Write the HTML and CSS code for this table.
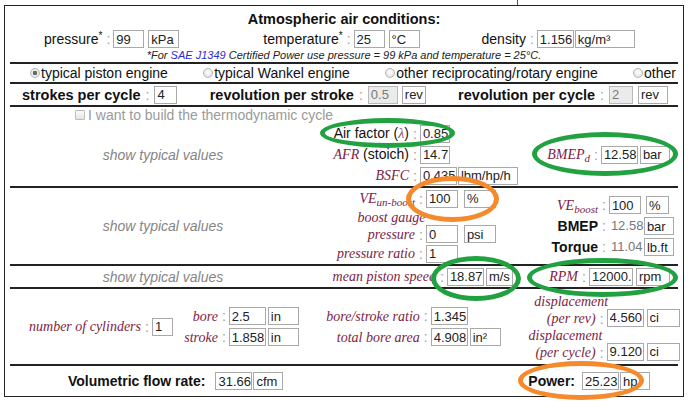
FILE: index.html
```html
<!DOCTYPE html>
<html lang="en">
<head>
<meta charset="utf-8">
<title>Engine calculator</title>
<link rel="stylesheet" href="styles.css">
</head>
<body>
<div class="tick"></div>
<div class="panel">
  <div class="sec atm">
    <div class="title">Atmospheric air conditions:</div>
    <div class="atm-row">
      <div class="fld"><span class="lb">pressure<sup>*</sup></span><span class="c">:</span><input class="box w31" value="99"><input class="box w31 g4" value="kPa"></div>
      <div class="fld g-temp"><span class="lb">temperature<sup>*</sup></span><span class="c">:</span><input class="box w31" value="25"><input class="box w31 g4" value="°C"></div>
      <div class="fld g-dens"><span class="lb">density</span><span class="c">:</span><input class="box w37" value="1.156"><input class="box w60 g1" value="kg/m³"></div>
    </div>
    <div class="note">*For <span class="link">SAE J1349</span> Certified Power use pressure = 99 kPa and temperature = 25°C.</div>
  </div>

  <div class="sec radios">
    <span class="opt"><span class="radio on"></span>typical piston engine</span>
    <span class="opt"><span class="radio"></span>typical Wankel engine</span>
    <span class="opt"><span class="radio"></span>other reciprocating/rotary engine</span>
    <span class="opt"><span class="radio"></span>other</span>
  </div>

  <div class="sec strokes">
    <div class="fld"><b class="blb">strokes per cycle</b><span class="c">:</span><input class="box w23" value="4"></div>
    <div class="fld"><b class="blb">revolution per stroke</b><span class="c">:</span><input class="box w30 dis" value="0.5" disabled><input class="box w24 g4" value="rev"></div>
    <div class="fld"><b class="blb">revolution per cycle</b><span class="c">:</span><input class="box w24 dis" value="2" disabled><input class="box w30 g5" value="rev"></div>
  </div>

  <div class="sec thermo">
    <div class="chkrow"><span class="chk"></span>I want to build the thermodynamic cycle</div>
    <div class="cols">
      <div class="colL">show typical values</div>
      <div class="colM">
        <div class="fld"><span class="lb lw93">Air factor (<i class="m lam">λ</i>)</span><span class="c">:</span><input class="box w30" value="0.85"></div>
        <div class="fld"><span class="lb lw93"><i class="m">AFR</i> (stoich)</span><span class="c">:</span><input class="box w30" value="14.7"></div>
        <div class="fld"><span class="lb lw93"><i class="m">BSFC</i></span><span class="c">:</span><input class="box w37" value="0.435"><input class="box w60 g1" value="lbm/hp/h"></div>
      </div>
      <div class="colR">
        <div class="fld"><span class="lb lw70"><i class="m">BMEP<sub>d</sub></i></span><span class="c">:</span><input class="box w37" value="12.58"><input class="box w30 g2" value="bar"></div>
      </div>
    </div>
  </div>

  <div class="sec cols boost">
    <div class="colL">show typical values</div>
    <div class="colM">
      <div class="fld"><span class="lb lw99"><i class="m">VE<sub>un-boost</sub></i></span><span class="c">:</span><input class="box w32" value="100"><input class="box w32 g6" value="%"></div>
      <div class="fld two"><span class="lb lw99"><span class="stack"><i class="m over">boost gauge</i><i class="m">pressure</i></span></span><span class="c">:</span><input class="box w32" value="0"><input class="box w32 g6" value="psi"></div>
      <div class="fld"><span class="lb lw99"><i class="m">pressure ratio</i></span><span class="c">:</span><input class="box w32" value="1"></div>
    </div>
    <div class="colR">
      <div class="fld"><span class="lb lw78"><i class="m">VE<sub>boost</sub></i></span><span class="c">:</span><input class="box w32" value="100"><input class="box w23 g5" value="%"></div>
      <div class="fld"><span class="lb lw78"><b>BMEP</b></span><span class="c">:</span><span class="val">12.58</span><input class="box w30 g1" value="bar"></div>
      <div class="fld"><span class="lb lw78"><b>Torque</b></span><span class="c">:</span><span class="val">11.04</span><input class="box w30 g1" value="lb.ft"></div>
    </div>
  </div>

  <div class="sec cols piston">
    <div class="colL">show typical values</div>
    <div class="colM">
      <div class="fld"><span class="lb lw120"><i class="m">mean piston speed</i></span><span class="c">:</span><input class="box w37" value="18.87"><input class="box w27 g2" value="m/s"></div>
    </div>
    <div class="colR">
      <div class="fld"><span class="lb lw58"><i class="m">RPM</i></span><span class="c">:</span><input class="box w44" value="12000.0"><input class="box w34 g3" value="rpm"></div>
    </div>
  </div>

  <div class="sec geo">
    <div class="fld"><span class="lb lw131"><i class="m">number of cylinders</i></span><span class="c">:</span><input class="box w21" value="1"></div>
    <div class="gcol">
      <div class="fld"><span class="lb lw45"><i class="m">bore</i></span><span class="c">:</span><input class="box w37" value="2.5"><input class="box w31 g2" value="in"></div>
      <div class="fld"><span class="lb lw45"><i class="m">stroke</i></span><span class="c">:</span><input class="box w37" value="1.858"><input class="box w31 g2" value="in"></div>
    </div>
    <div class="gcol">
      <div class="fld"><span class="lb lw121"><i class="m">bore/stroke ratio</i></span><span class="c">:</span><input class="box w37" value="1.345"></div>
      <div class="fld"><span class="lb lw121"><i class="m">total bore area</i></span><span class="c">:</span><input class="box w37" value="4.908"><input class="box w31 g2" value="in²"></div>
    </div>
    <div class="gcol">
      <div class="fld two"><span class="lb lw95"><span class="stack"><i class="m over">displacement</i><i class="m">(per rev)</i></span></span><span class="c">:</span><input class="box w37" value="4.560"><input class="box w33 g3" value="ci"></div>
      <div class="fld two"><span class="lb lw95"><span class="stack"><i class="m over">displacement</i><i class="m">(per cycle)</i></span></span><span class="c">:</span><input class="box w37" value="9.120"><input class="box w33 g3" value="ci"></div>
    </div>
  </div>

  <div class="sec flow">
    <div class="fld"><b>Volumetric flow rate:</b><input class="box w37 g10" value="31.66"><input class="box w30 g1" value="cfm"></div>
    <div class="fld"><b>Power:</b><input class="box w37 g7" value="25.23"><input class="box w30 g1" value="hp"></div>
  </div>
</div>

<span class="ring green r-air"></span>
<span class="ring green r-bmepd"></span>
<span class="ring orange r-ve"></span>
<span class="ring green r-mps"></span>
<span class="ring green r-rpm"></span>
<span class="ring orange r-power"></span>
</body>
</html>
```

FILE: styles.css
```css
* { box-sizing: border-box; }
html, body { margin: 0; padding: 0; }
body {
  position: relative;
  width: 693px;
  height: 402px;
  overflow: hidden;
  background: #fff;
  color: #111;
  font: 14px/16px "Liberation Sans", Arial, sans-serif;
}

.tick { width: 1px; height: 5px; margin-left: 517px; background: #8a3b5c; }

.panel {
  margin-left: 4px;
  width: 680px;
  border: 1px solid #222;
  padding: 0 5px;
}

.sec { border-bottom: 2px solid #222; }
.sec:last-child { border-bottom: 0; }

/* atmospheric block */
.atm { height: 58px; padding-top: 4px; }
.title { text-align: center; font-weight: bold; font-size: 14.5px; line-height: 18px; }
.atm-row { display: flex; align-items: center; height: 18px; margin-top: 2px; padding-left: 34px; }
.g-temp { margin-left: 84px; }
.g-dens { margin-left: 62px; }
.note { text-align: center; font-size: 11px; line-height: 13px; font-style: italic; margin-top: 1px; color: #222; }
.link { color: #2b2bd6; }

/* radio row */
.radios {
  height: 20px;
  display: flex;
  align-items: center;
  justify-content: space-between;
  padding: 0 2px 0 20px;
}
.opt { display: flex; align-items: center; white-space: nowrap; }
.radio {
  width: 10px; height: 10px;
  border-radius: 50%;
  border: 1px solid #b4b4b4;
  background: radial-gradient(circle at 50% 40%, #fff, #dcdcdc);
  margin-right: 1px;
}
.radio.on { background: radial-gradient(circle, #6a6a6a 0 2px, #f2f2f2 2.6px, #dcdcdc); }

/* strokes row */
.strokes {
  height: 23px;
  display: flex;
  align-items: center;
  justify-content: space-between;
  padding: 0 10px 0 12px;
}
.blb { font-weight: bold; font-size: 14.5px; }
.strokes .c { margin: 0 5px; }

/* thermo */
.thermo { height: 81px; }
.chkrow { height: 16px; display: flex; align-items: center; padding-left: 65px; color: #9a9a9a; }
.chk {
  width: 10px; height: 10px;
  border: 1px solid #bdbdbd;
  border-radius: 1px;
  background: linear-gradient(#fdfdfd, #e2e2e2);
  margin-right: 3px;
}
.thermo .cols { height: 63px; }

.cols { display: flex; }
.boost { height: 78px; }
.piston { height: 23px; }

.colL {
  width: 306px; flex: none;
  display: flex; align-items: center; justify-content: center;
  font-style: italic; color: #858585;
}
.colM { width: 204px; flex: none; display: flex; flex-direction: column; justify-content: center; }
.colR { flex: 1; display: flex; flex-direction: column; justify-content: center; }

/* fields */
.fld { display: flex; align-items: center; height: 21px; white-space: nowrap; flex: none; }
.atm-row .fld, .strokes .fld, .flow .fld { height: auto; }
.fld.two { height: 34px; align-items: flex-end; }
.lb { flex: none; text-align: right; }
.c { color: #a0a0a0; margin: 0 3px 0 4px; }

.lw45 { width: 45px; }
.lw58 { width: 58px; }
.lw70 { width: 70px; }
.lw78 { width: 78px; }
.lw93 { width: 93px; }
.lw95 { width: 95px; }
.lw99 { width: 99px; }
.lw120 { width: 120px; }
.lw121 { width: 121px; }
.lw131 { width: 131px; }

.m {
  font-family: "Liberation Serif", "Times New Roman", serif;
  font-style: italic;
  color: #7d1d45;
  font-size: 14px;
}
.m sub { font-size: 11px; line-height: 0; vertical-align: -3px; }
.lam { color: #8a4a68; }
sup { font-size: 10px; line-height: 0; vertical-align: 5px; }

.stack {
  display: inline-flex;
  flex-direction: column;
  align-items: center;
  line-height: 17px;
  vertical-align: bottom;
}
.over { margin: 0 -30px; }

.box {
  flex: none;
  height: 18px;
  margin: 0;
  border: 1px solid #a9a9a9;
  border-radius: 0;
  padding: 0 0 0 2px;
  font: 13px "Liberation Sans", Arial, sans-serif;
  color: #222;
  background: #fff;
  outline: none;
}
.dis { background: #ebebeb; color: #7a7a7a; border-color: #b9b9b9; }
.val { display: inline-block; width: 34px; padding: 0 2px; color: #777; font-size: 13px; }

.w21 { width: 21px; } .w23 { width: 23px; } .w24 { width: 24px; }
.w27 { width: 27px; } .w30 { width: 30px; } .w31 { width: 31px; }
.w32 { width: 32px; } .w33 { width: 33px; } .w34 { width: 34px; }
.w37 { width: 37px; } .w44 { width: 44px; }
.w60 { width: 60px; }
.g1 { margin-left: 1px; } .g2 { margin-left: 2px; } .g3 { margin-left: 3px; }
.g4 { margin-left: 4px; } .g5 { margin-left: 5px; } .g6 { margin-left: 6px; }
.g7 { margin-left: 7px; } .g10 { margin-left: 10px; }

/* geometry */
.geo { height: 77px; display: flex; align-items: center; }
.gcol { display: flex; flex-direction: column; }

/* flow */
.flow {
  height: 30px;
  display: flex;
  align-items: center;
  justify-content: space-between;
  padding: 0 28px 0 58px;
}

/* annotation rings drawn over the form */
.ring { position: absolute; border: 5px solid; border-radius: 50%; pointer-events: none; }
.green { border-color: #22a140; }
.orange { border-color: #f48a2c; }
.r-air { left: 320px; top: 118px; width: 135px; height: 30px; }
.r-bmepd { left: 532px; top: 132px; width: 146px; height: 44px; }
.r-ve { left: 406px; top: 176px; width: 93px; height: 46px; }
.r-mps { left: 431px; top: 256px; width: 90px; height: 45px; }
.r-rpm { left: 527px; top: 258px; width: 151px; height: 39px; }
.r-power { left: 518px; top: 361px; width: 126px; height: 39px; }
```
